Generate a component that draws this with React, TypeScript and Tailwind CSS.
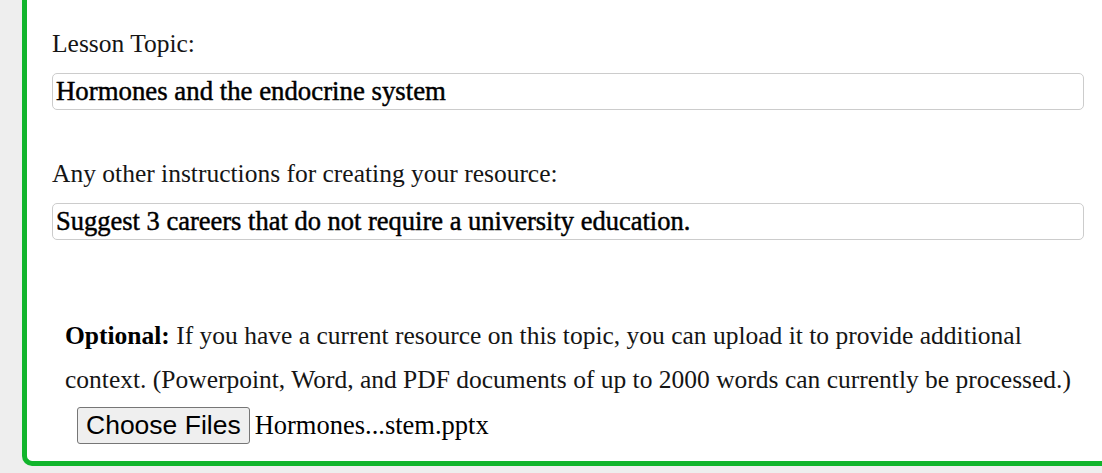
import React from "react";

export default function App() {
  const serif = { fontFamily: '"Liberation Serif", "Times New Roman", serif' };
  return (
    <div className="w-[1102px] h-[473px] bg-[#eeeeee] overflow-hidden pl-[22px]">
      <div
        className="w-[1200px] h-[466px] bg-white border-l-[5px] border-b-[5px] border-[#11b52c] rounded-bl-[10px] pl-[25px] pt-[28px] text-[#151515]"
        style={serif}
      >
        <div className="w-[1032px]">
          <label className="block text-[25.5px] leading-[32px]">Lesson Topic:</label>
          <div className="mt-[13px] h-[37px] border border-[#cccccc] rounded-[5px] px-[3px] flex items-center text-[26.8px] text-black [-webkit-text-stroke:0.45px_black]">
            Hormones and the endocrine system
          </div>
          <label className="block mt-[48px] text-[25.5px] leading-[32px]">
            Any other instructions for creating your resource:
          </label>
          <div className="mt-[13px] h-[37px] border border-[#cccccc] rounded-[5px] px-[3px] flex items-center text-[26.5px] text-black [-webkit-text-stroke:0.45px_black]">
            Suggest 3 careers that do not require a university education.
          </div>
          <div className="mt-[74px] pl-[13px] w-[1050px] text-[25.5px] leading-[44px]">
            <p className="whitespace-nowrap">
              <b className="text-black">Optional:</b> If you have a current resource on this topic, you can upload it to provide additional
              <br />
              context. (Powerpoint, Word, and PDF documents of up to 2000 words can currently be processed.)
            </p>
            <div className="flex items-center mt-[1px] pl-[12px]">
              <button
                className="h-[37px] px-[8px] bg-[#efefef] border border-[#767676] rounded-[3px] text-[26.5px] text-black leading-none"
                style={{ fontFamily: '"Liberation Sans", Arial, sans-serif' }}
              >
                Choose Files
              </button>
              <span className="ml-[5px] text-[26.5px] text-black">Hormones...stem.pptx</span>
            </div>
          </div>
        </div>
      </div>
    </div>
  );
}
